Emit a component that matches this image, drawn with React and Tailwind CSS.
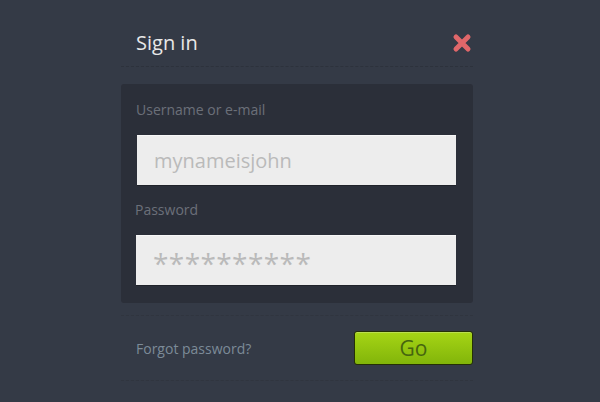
import React from 'react';

const font = { fontFamily: '"Open Sans", "Noto Sans", sans-serif' };

function CloseIcon() {
  return (
    <svg width="20" height="20" viewBox="0 0 20 20" aria-hidden="true">
      <path d="M4 4 L16 16 M16 4 L4 16" stroke="#e0676a" strokeWidth="5" strokeLinecap="round" />
    </svg>
  );
}

function Field({ label, value, className = '', valueClass = '' }) {
  return (
    <div className={className}>
      <div className="h-[18px] pl-[15px] text-[14px] leading-[18px] text-[#6b7079]">{label}</div>
      <div className="mt-[16px] ml-[16px] mr-[17px] h-[50px] flex items-center px-[17px] bg-[#ededed] border-t border-[#f7f7f7] shadow-[0_1px_0_rgba(0,0,0,0.25)]">
        <span className={`text-[#bababa] ${valueClass}`}>{value}</span>
      </div>
    </div>
  );
}

export default function App() {
  return (
    <div className="w-full h-[402px] bg-[#343a46] overflow-hidden" style={font}>
      <div className="ml-[121px] w-[352px]">
        {/* header */}
        <div className="h-[67px] pt-[19px] pl-[15px] pr-[1px] flex items-center justify-between border-b border-dashed border-[#2d323c]">
          <span className="text-[20px] leading-none text-[#e8e8e8]">Sign in</span>
          <CloseIcon />
        </div>

        {/* form panel */}
        <div className="mt-[17px] h-[219px] rounded-[3px] bg-[#2b2f39] pt-[17px]">
          <Field label="Username or e-mail" value="mynameisjohn" valueClass="text-[20px]" />
          <Field
            label="Password"
            value="**********"
            className="mt-[16px] -ml-[1px]"
            valueClass="text-[28px] leading-none tracking-[0.4px] pt-[5px] text-[#b5b5b5]"
          />
        </div>

        {/* footer */}
        <div className="mt-[12px] h-[66px] flex items-center justify-between pl-[15px] border-t border-b border-dashed border-[#30353f]">
          <a className="text-[14px] text-[#7c8b98]">Forgot password?</a>
          <button className="w-[119px] h-[34px] rounded-[3px] border border-[#253005] bg-gradient-to-b from-[#a6d515] to-[#82b50a] shadow-[inset_0_1px_0_rgba(255,255,255,0.25)] text-[21px] leading-none text-[#46650f]">
            Go
          </button>
        </div>
      </div>
    </div>
  );
}
